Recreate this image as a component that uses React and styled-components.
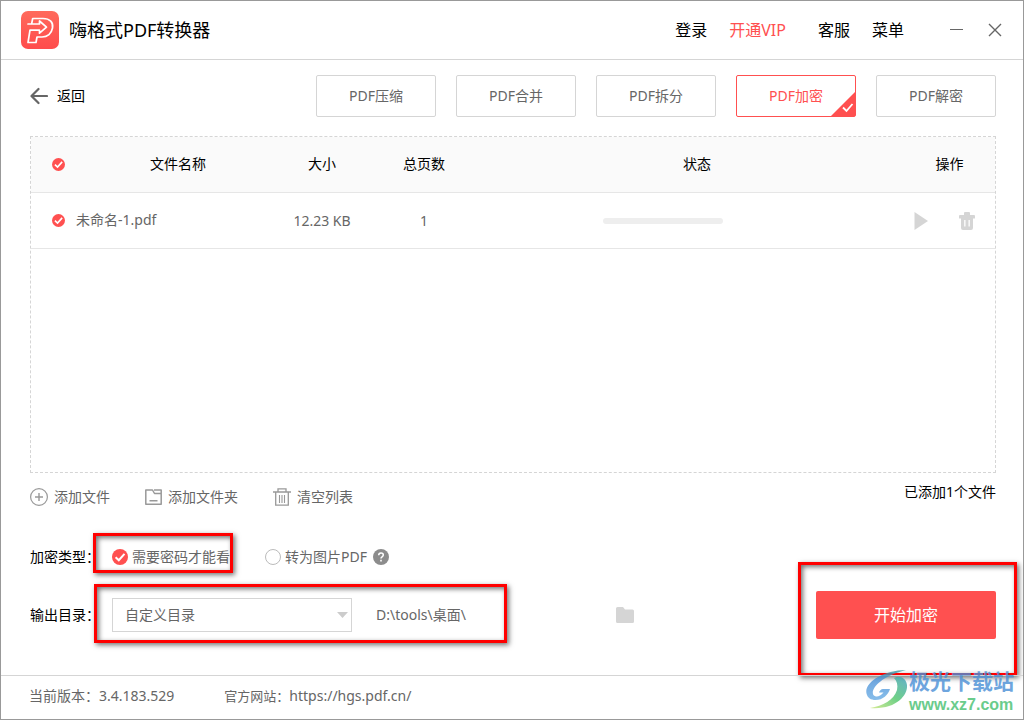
import React from "react";
import styled, { createGlobalStyle, css } from "styled-components";

const red = "#ff5050";

const GlobalStyle = createGlobalStyle`
  *, *::before, *::after { box-sizing: border-box; }
  body {
    margin: 0;
    background: #fff;
    color: #000;
    font-family: "Noto Sans", "Noto Sans CJK SC", sans-serif;
    font-size: 14px;
    line-height: 20px;
  }
  button, input, select { font: inherit; color: inherit; }
  svg { display: block; flex: none; }
`;

const Window = styled.div`
  display: flex;
  flex-direction: column;
  min-height: 100vh;
  border: 1px solid #999;
`;

const Header = styled.header`
  display: flex;
  align-items: center;
  height: 59px;
  padding: 0 21px 0 20px;
  border-bottom: 1px solid #d5d5d5;
`;

const Title = styled.h1`
  margin: 0 auto 0 10px;
  font-size: 18px;
  font-weight: 400;
  line-height: 24px;
`;

const PlainButton = styled.button`
  display: flex;
  align-items: center;
  padding: 0;
  border: 0;
  background: none;
  white-space: nowrap;
  cursor: pointer;
`;

const Menu = styled.nav`
  display: flex;
  gap: 22px;
  margin-right: 45px;
`;

const MenuButton = styled(PlainButton)`
  font-size: 16px;
  line-height: 24px;
  ${(p) => p.$accent && css`
    margin-right: 10px;
    color: ${red};
  `}
`;

const WindowButtons = styled.div`
  display: flex;
  gap: 25px;
`;

const Content = styled.main`
  display: flex;
  flex: 1;
  flex-direction: column;
  padding: 15px 27px 36px 29px;
`;

const TopBar = styled.div`
  display: flex;
  align-items: center;
  justify-content: space-between;
`;

const BackButton = styled(PlainButton)`
  gap: 9px;
`;

const Tabs = styled.div`
  display: flex;
  gap: 20px;
`;

const Tab = styled.button`
  position: relative;
  width: 120px;
  height: 42px;
  padding: 0;
  border: 1px solid ${(p) => (p.$active ? red : "#d5d5d5")};
  border-radius: 2px;
  background: #fff;
  color: ${(p) => (p.$active ? red : "#666")};
  cursor: pointer;
  svg {
    position: absolute;
    right: 0;
    bottom: 0;
  }
`;

const ListBox = styled.section`
  flex: 1;
  min-height: 200px;
  margin-top: 19px;
  border: 1px dashed #d5d5d5;
`;

const FileTable = styled.table`
  width: 100%;
  border-collapse: separate;
  border-spacing: 0;
  table-layout: fixed;
  th, td {
    height: 56px;
    padding: 0;
    border-bottom: 1px solid #e6e6e6;
    font-weight: 400;
    text-align: center;
  }
  th {
    padding-bottom: 2px;
    background: #fafafa;
  }
  td { color: #666; }
`;

const Col = styled.col`
  width: ${(p) => p.$width || "auto"};
`;

const CheckCell = styled.td`
  && { padding: 0 0 0 21px; }
`;

const NameCell = styled.td`
  && {
    padding-bottom: 2px;
    text-align: left;
  }
`;

const StatusCell = styled.td`
  && { padding-right: 68px; }
`;

const ActionHead = styled.th`
  && { padding-right: 6px; }
`;

const Progress = styled.div`
  width: 120px;
  height: 6px;
  margin: 0 auto;
  border-radius: 3px;
  background: #eee;
`;

const RowActions = styled.div`
  display: flex;
  gap: 31px;
  padding-left: 4px;
`;

const ToggleBox = styled.span`
  display: grid;
  width: ${(p) => p.$size}px;
  height: ${(p) => p.$size}px;
  input, svg {
    grid-area: 1 / 1;
    width: 100%;
    height: 100%;
  }
  input {
    margin: 0;
    appearance: none;
    cursor: pointer;
  }
  svg { pointer-events: none; }
`;

const Toolbar = styled.div`
  display: flex;
  align-items: flex-start;
  justify-content: space-between;
  margin-top: 9px;
`;

const Tools = styled.div`
  display: flex;
  gap: 35px;
`;

const Tool = styled(PlainButton)`
  gap: 6px;
  height: 30px;
  color: #666;
`;

const OptionRow = styled.div`
  display: flex;
  align-items: center;
  margin-top: 35px;
`;

const OutputRow = styled.div`
  display: flex;
  align-items: center;
  margin-top: 24px;
`;

const FieldLabel = styled.label`
  width: 82px;
  flex: none;
`;

const Option = styled.label`
  position: relative;
  display: flex;
  align-items: center;
  gap: 4px;
  margin-right: 35px;
  color: #666;
  white-space: nowrap;
`;

const OptionGroup = styled.div`
  display: flex;
  align-items: center;
  gap: 6px;
  ${Option} { margin-right: 0; }
`;

const OutputFields = styled.div`
  position: relative;
  display: flex;
  align-items: center;
  gap: 24px;
  margin-right: 112px;
  color: #666;
`;

const SelectBox = styled.div`
  display: grid;
  align-items: center;
  width: 240px;
  select, svg { grid-area: 1 / 1; }
  select {
    height: 34px;
    padding: 0 24px 0 12px;
    border: 1px solid #d5d5d5;
    border-radius: 0;
    background: #fff;
    appearance: none;
  }
  svg {
    justify-self: end;
    margin-right: 4px;
    pointer-events: none;
  }
`;

const PathInput = styled.input`
  width: 128px;
  padding: 0;
  border: 0;
  background: none;
`;

const StartBox = styled.div`
  position: relative;
  margin-left: auto;
`;

const StartButton = styled.button`
  width: 180px;
  height: 48px;
  border: 0;
  border-radius: 2px;
  background: ${red};
  color: #fff;
  font-size: 16px;
  cursor: pointer;
`;

const Highlight = styled.span`
  position: absolute;
  inset: ${(p) => p.$inset};
  border: 3px solid #f00;
  box-shadow: 2px 2px 5px rgba(0, 0, 0, 0.55), inset 2px 2px 5px rgba(0, 0, 0, 0.55);
  pointer-events: none;
`;

const Footer = styled.footer`
  position: relative;
  display: flex;
  align-items: center;
  gap: 50px;
  height: 44px;
  padding: 0 28px 4px;
  border-top: 1px solid #d5d5d5;
  color: #666;
`;

const Site = styled.span`
  font-size: 13px;
  a {
    color: inherit;
    font-size: 14px;
    text-decoration: none;
  }
`;

const Watermark = styled.div`
  position: absolute;
  right: 9px;
  bottom: 3px;
  display: flex;
  align-items: flex-start;
  gap: 1px;
  opacity: 0.8;
`;

const WatermarkText = styled.div`
  color: #4a8fd6;
  font-family: "Liberation Sans", "Noto Sans CJK SC", sans-serif;
  font-size: 21px;
  font-weight: 700;
  line-height: 24px;
  small {
    display: block;
    color: #45c06f;
    font-size: 16px;
    line-height: 22px;
  }
`;

function Toggle({ size, type = "checkbox", label, checked, ...rest }) {
  return (
    <ToggleBox $size={size}>
      <input type={type} aria-label={label} defaultChecked={checked} {...rest} />
      <svg viewBox="0 0 16 16">
        {checked ? (
          <>
            <circle cx="8" cy="8" r="8" fill={red} />
            <path d="M3.6 8.2l3.2 3 5.7-6.4" fill="none" stroke="#fff" strokeWidth="2" />
          </>
        ) : (
          <circle cx="8" cy="8" r="7.5" fill="#fff" stroke="#bbb" />
        )}
      </svg>
    </ToggleBox>
  );
}

const Logo = () => (
  <svg width="38" height="38" viewBox="0 0 38 38">
    <defs>
      <linearGradient id="logo" x1="0" y1="0" x2="0" y2="1">
        <stop offset="0" stopColor="#ff6a5c" />
        <stop offset="1" stopColor="#ff4c4c" />
      </linearGradient>
    </defs>
    <rect width="38" height="38" rx="7" fill="url(#logo)" />
    <path
      d="M10.700 12.500L11.700 7.500H22c7 0 10.500 4 9.500 9.500S26.500 26 21 26h-5l-1 5.500H7L9 19.200h9.500v3l7-6-7-6.200v3H7"
      fill="none"
      stroke="#fff"
      strokeWidth="1.700"
      strokeLinejoin="round"
      strokeLinecap="round"
    />
  </svg>
);

const tabs = ["PDF压缩", "PDF合并", "PDF拆分", "PDF加密", "PDF解密"];

export default function App() {
  return (
    <>
      <GlobalStyle />
      <Window>
        <Header>
          <Logo />
          <Title>嗨格式PDF转换器</Title>
          <Menu>
            <MenuButton>登录</MenuButton>
            <MenuButton $accent>开通VIP</MenuButton>
            <MenuButton>客服</MenuButton>
            <MenuButton>菜单</MenuButton>
          </Menu>
          <WindowButtons>
            <PlainButton aria-label="最小化">
              <svg width="14" height="14" viewBox="0 0 14 14">
                <path d="M1 6.500h13" stroke="#666" />
              </svg>
            </PlainButton>
            <PlainButton aria-label="关闭">
              <svg width="14" height="14" viewBox="0 0 14 14">
                <path d="M1 1l12 12M13 1L1 13" stroke="#666" strokeWidth="1.400" />
              </svg>
            </PlainButton>
          </WindowButtons>
        </Header>

        <Content>
          <TopBar>
            <BackButton>
              <svg width="18" height="18" viewBox="0 0 18 18">
                <path
                  d="M8.500 2L1.500 9l7 7M2 9h15"
                  fill="none"
                  stroke="#666"
                  strokeWidth="2.200"
                  strokeLinecap="round"
                  strokeLinejoin="round"
                />
              </svg>
              返回
            </BackButton>
            <Tabs>
              {tabs.map((name) => {
                const active = name === "PDF加密";
                return (
                  <Tab key={name} $active={active}>
                    {name}
                    {active && (
                      <svg width="24" height="24" viewBox="0 0 24 24">
                        <path d="M24 0v24H0z" fill={red} />
                        <path d="M12 15.500l3.500 3.500 6-7" fill="none" stroke="#fff" strokeWidth="1.800" />
                      </svg>
                    )}
                  </Tab>
                );
              })}
            </Tabs>
          </TopBar>

          <ListBox>
            <FileTable>
              <colgroup>
                <Col $width="45px" />
                <Col $width="204px" />
                <Col $width="84px" />
                <Col $width="120px" />
                <Col />
                <Col $width="85px" />
              </colgroup>
              <thead>
                <tr>
                  <CheckCell as="th">
                    <Toggle size={13} label="全选" checked />
                  </CheckCell>
                  <th>文件名称</th>
                  <th>大小</th>
                  <th>总页数</th>
                  <th>状态</th>
                  <ActionHead>操作</ActionHead>
                </tr>
              </thead>
              <tbody>
                <tr>
                  <CheckCell>
                    <Toggle size={13} label="未命名-1.pdf" checked />
                  </CheckCell>
                  <NameCell>未命名-1.pdf</NameCell>
                  <td>12.23 KB</td>
                  <td>1</td>
                  <StatusCell>
                    <Progress />
                  </StatusCell>
                  <td>
                    <RowActions>
                      <PlainButton aria-label="开始">
                        <svg width="14" height="18" viewBox="0 0 14 18">
                          <path d="M0.500 0L14 9 0.500 18z" fill="#d5d5d5" />
                        </svg>
                      </PlainButton>
                      <PlainButton aria-label="删除">
                        <svg width="16" height="18" viewBox="0 0 16 18" fill="#d5d5d5">
                          <path
                            fillRule="evenodd"
                            d="M5 3V1q0-1 1-1h4q1 0 1 1v2h4q1 0 1 1v2q0 .5-.5.5H14V16q0 2-2 2H4q-2 0-2-2V6.500H.5Q0 6.500 0 6V4q0-1 1-1zM5.200 8v6.500h1.300V8zM9.500 8v6.500h1.300V8z"
                          />
                        </svg>
                      </PlainButton>
                    </RowActions>
                  </td>
                </tr>
              </tbody>
            </FileTable>
          </ListBox>

          <Toolbar>
            <Tools>
              <Tool>
                <svg width="18" height="18" viewBox="0 0 18 18" fill="none" stroke="#999">
                  <circle cx="9" cy="9" r="8.400" strokeWidth="1.200" />
                  <path d="M5 9h8M9 5v8" strokeWidth="1.400" />
                </svg>
                添加文件
              </Tool>
              <Tool>
                <svg width="17" height="18" viewBox="0 0 17 18" fill="none" stroke="#999" strokeWidth="1.500" strokeLinejoin="round">
                  <path d="M.8 16.200V2h6.700l2 3.500h6.700v10.700zM9 2h7.200v3.500M4.500 12.800h8" />
                </svg>
                添加文件夹
              </Tool>
              <Tool>
                <svg width="18" height="18" viewBox="0 0 18 18" fill="none" stroke="#999" strokeWidth="1.300">
                  <path d="M0 4h18M5 4V.8h8V4M2.700 4v13.200h12.600V4" />
                  <path d="M6.500 7v8M9 7v8M11.500 7v8" strokeWidth="1.100" />
                </svg>
                清空列表
              </Tool>
            </Tools>
            <span>已添加1个文件</span>
          </Toolbar>

          <OptionRow>
            <FieldLabel as="span">加密类型：</FieldLabel>
            <Option>
              <Toggle size={16} type="radio" name="mode" checked />
              需要密码才能看
              <Highlight $inset="-14px -3px -6px -19px" />
            </Option>
            <OptionGroup>
              <Option>
                <Toggle size={16} type="radio" name="mode" />
                转为图片PDF
              </Option>
              <PlainButton aria-label="帮助">
                <svg width="16" height="16" viewBox="0 0 16 16">
                  <circle cx="8" cy="8" r="8" fill="#8c8c8c" />
                  <path d="M5.700 6.300q0-2.300 2.300-2.300t2.300 2q0 1-1.200 1.800Q8 8.500 8 9.500" fill="none" stroke="#fff" strokeWidth="1.500" />
                  <path d="M7.200 10.800h1.600v1.600H7.200z" fill="#fff" />
                </svg>
              </PlainButton>
            </OptionGroup>
          </OptionRow>

          <OutputRow>
            <FieldLabel htmlFor="output">输出目录：</FieldLabel>
            <OutputFields>
              <SelectBox>
                <select id="output">
                  <option>自定义目录</option>
                </select>
                <svg width="11" height="6" viewBox="0 0 11 6">
                  <path d="M0 0h11L5.500 6z" fill="#ccc" />
                </svg>
              </SelectBox>
              <PathInput aria-label="路径" readOnly value={"D:\\tools\\桌面\\"} />
              <Highlight $inset="-14px -3px -11px -18px" />
            </OutputFields>
            <PlainButton aria-label="选择文件夹">
              <svg width="18" height="16" viewBox="0 0 18 16">
                <path d="M0 1.500Q0 0 1.500 0H7l2 2.500h7.500q1.500 0 1.500 1.500v10.500q0 1.500-1.500 1.500h-15Q0 16 0 14.500z" fill="#d5d5d5" />
              </svg>
            </PlainButton>
            <StartBox>
              <StartButton>开始加密</StartButton>
              <Highlight $inset="-29px -21px -37px -18px" />
            </StartBox>
          </OutputRow>
        </Content>

        <Footer>
          <span>当前版本：3.4.183.529</span>
          <Site>
            官方网站：<a href="https://hgs.pdf.cn/">https://hgs.pdf.cn/</a>
          </Site>
          <Watermark>
            <svg width="42" height="40" viewBox="0 0 42 40">
              <defs>
                <linearGradient id="crescent" x1="0" y1="0" x2="0" y2="1">
                  <stop offset="0" stopColor="#3a9a9a" />
                  <stop offset="0.300" stopColor="#4a8fd6" />
                  <stop offset="1" stopColor="#6aaee6" />
                </linearGradient>
                <linearGradient id="leaf" x1="1" y1="0" x2="0" y2="1">
                  <stop offset="0" stopColor="#3f9fc0" />
                  <stop offset="0.500" stopColor="#4cc56a" />
                  <stop offset="1" stopColor="#cfe87a" />
                </linearGradient>
              </defs>
              <path d="M40 0C17 0-2 13 .5 23.500 1.500 28 5 30 9.500 30 17 30 22 25 24 19h-7c-2 0-3.500 2-4 3.500h4.500C15 25.500 12 27 10 26.500 2 25 8 8 40 0z" fill="url(#crescent)" />
              <path d="M28 8c6-3 12 0 13 7 1 11-12 25-37 23 13-2 24-8 27-18 1-5 0-9-3-12z" fill="url(#leaf)" />
            </svg>
            <WatermarkText>
              极光下载站
              <small>www.xz7.com</small>
            </WatermarkText>
          </Watermark>
        </Footer>
      </Window>
    </>
  );
}
